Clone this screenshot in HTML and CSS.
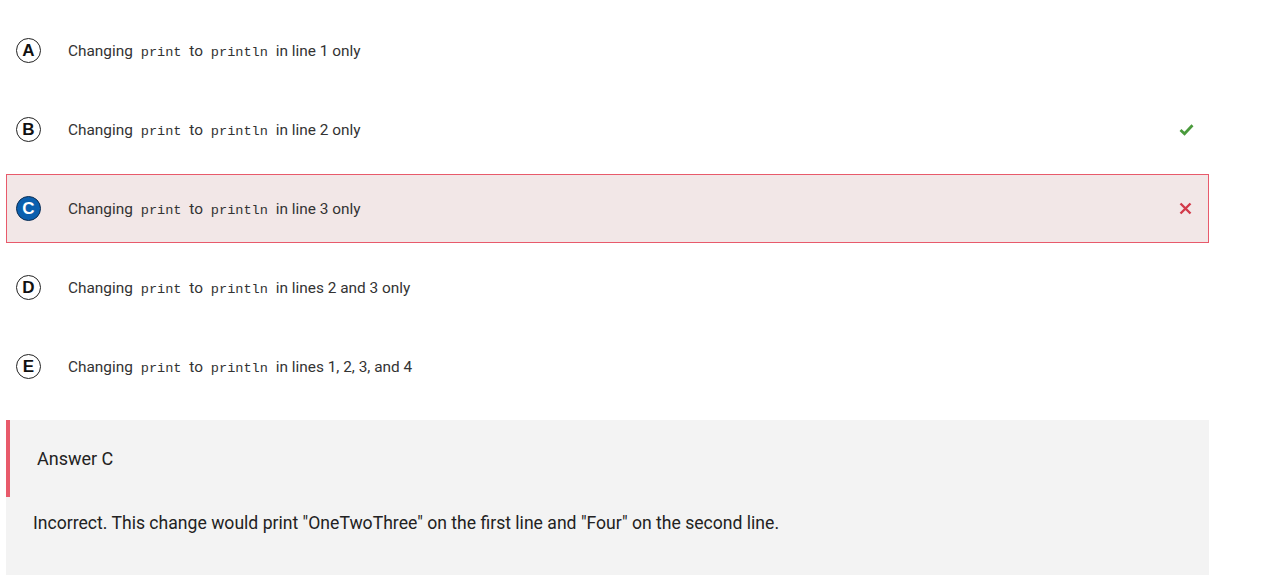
FILE: index.html
```html
<!DOCTYPE html>
<html>
<head>
<meta charset="utf-8">
<link rel="stylesheet" href="styles.css">
</head>
<body>
<div class="quiz">
  <div class="option">
    <span class="badge">A</span>
    <span class="label">Changing <code>print</code> to <code>println</code> in line 1 only</span>
  </div>
  <div class="option">
    <span class="badge">B</span>
    <span class="label">Changing <code>print</code> to <code>println</code> in line 2 only</span>
    <svg class="mark" width="15" height="13" viewBox="0 0 15 13"><path d="M1.5 7 L5.5 10.7 L13.5 2.3" fill="none" stroke="#4a9a3c" stroke-width="2.8"/></svg>
  </div>
  <div class="option wrong">
    <span class="badge selected">C</span>
    <span class="label">Changing <code>print</code> to <code>println</code> in line 3 only</span>
    <svg class="mark" width="15" height="13" viewBox="0 0 15 13"><path d="M1.5 1.5 L11.5 11.5 M11.5 1.5 L1.5 11.5" fill="none" stroke="#d23a4a" stroke-width="2.4"/></svg>
  </div>
  <div class="option">
    <span class="badge">D</span>
    <span class="label">Changing <code>print</code> to <code>println</code> in lines 2 and 3 only</span>
  </div>
  <div class="option">
    <span class="badge">E</span>
    <span class="label">Changing <code>print</code> to <code>println</code> in lines 1, 2, 3, and 4</span>
  </div>
  <div class="answer">
    <div class="answer-head">Answer C</div>
    <p class="explain">Incorrect. This change would print "OneTwoThree" on the first line and "Four" on the second line.</p>
  </div>
</div>
</body>
</html>
```
FILE: styles.css
```css
html, body {
  margin: 0;
  padding: 0;
  background: #fff;
}
body {
  font-family: Roboto, "Liberation Sans", Arial, sans-serif;
  color: #333;
}
.quiz {
  width: 1203px;
  margin: 16px 0 0 6px;
}
.option {
  box-sizing: border-box;
  height: 69px;
  margin-bottom: 10px;
  border: 1px solid transparent;
  display: flex;
  align-items: center;
  padding-left: 9px;
  padding-right: 14px;
}
.option.wrong {
  background: #f2e7e7;
  border-color: #e85a6b;
}
.badge {
  box-sizing: border-box;
  width: 25px;
  height: 25px;
  border-radius: 50%;
  border: 1.5px solid #222;
  display: flex;
  align-items: center;
  justify-content: center;
  font-family: "Liberation Sans", Arial, sans-serif;
  font-weight: bold;
  font-size: 17px;
  color: #111;
  flex-shrink: 0;
}
.badge.selected {
  background: #0b5fae;
  border: 1.5px solid #0d2d52;
  color: #fff;
}
.label {
  margin-left: 27px;
  font-size: 15.4px;
  color: #333;
  flex: 1;
}
.label code {
  font-family: "Liberation Mono", "Courier New", monospace;
  font-size: 13.6px;
  margin: 0 4px;
  color: #333;
}
.mark {
  display: block;
  flex-shrink: 0;
}
.answer {
  margin-top: 19px;
  background: #f3f3f3;
  padding-bottom: 60px;
}
.answer-head {
  box-sizing: border-box;
  height: 77px;
  border-left: 4px solid #e85a6b;
  padding-left: 27px;
  display: flex;
  align-items: center;
  font-size: 18px;
  color: #222;
}
.explain {
  margin: 0;
  padding: 14px 0 0 27px;
  font-size: 17.6px;
  color: #222;
  line-height: 24px;
}
```
